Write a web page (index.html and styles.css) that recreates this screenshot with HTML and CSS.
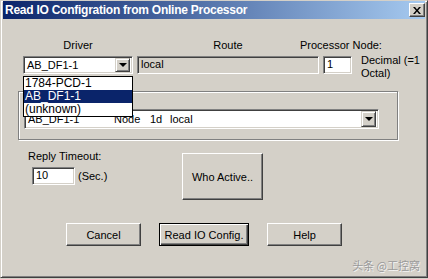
FILE: index.html
```html
<!DOCTYPE html>
<html lang="en">
<head>
    <meta charset="UTF-8">
    <meta name="viewport" content="width=device-width, initial-scale=1.0">
    <title>Read IO Configration</title>
    <link rel="stylesheet" href="styles.css">
</head>
<body>
<div class="window">
    <!-- Title bar ------------------------------------------------>
    <div class="titlebar">
        <span class="title">Read IO Configration from Online Processor</span>
        <button class="btn-close">
            <svg width="8" height="7" viewBox="0 0 8 7"><path d="M0 0h2l2 2.5L6 0h2L5 3.5 8 7H6L4 4.5 2 7H0l3-3.5z" fill="#000"/></svg>
        </button>
    </div>

    <div class="content">
        <!-- Driver / route / node ---------------------------------->
        <div class="top-grid">
            <div class="lbl lbl-driver">Driver</div>
            <div class="lbl lbl-route">Route</div>
            <div class="lbl lbl-node">Processor Node:</div>

            <div class="combo driver-combo">
                <span class="combo-text">AB_DF1-1</span>
                <span class="combo-arrow"><i class="tri"></i></span>
                <ul class="drop-list">
                    <li>1784-PCD-1</li>
                    <li class="selected">AB_DF1-1</li>
                    <li>(unknown)</li>
                </ul>
            </div>
            <div class="field disabled">local</div>
            <div class="field">1</div>
            <div class="note">Decimal (=1<br>Octal)</div>
        </div>

        <!-- Path group ---------------------------------------------->
        <div class="group">
            <div class="combo path-combo">
                <span class="combo-text">
                    <span class="col-drv">AB_DF1-1</span><span class="col-node">Node</span><span class="col-num">1d</span>local
                </span>
                <span class="combo-arrow"><i class="tri"></i></span>
            </div>
        </div>

        <!-- Timeout ------------------------------------------------->
        <div class="timeout-row">
            <div class="timeout">
                <div class="lbl">Reply Timeout:</div>
                <div class="timeout-input">
                    <div class="field small">10</div>
                    <span class="unit">(Sec.)</span>
                </div>
            </div>
            <button class="btn btn-who">Who Active..</button>
        </div>

        <!-- Dialog buttons ------------------------------------------>
        <div class="actions">
            <button class="btn">Cancel</button>
            <button class="btn btn-default">Read IO Config.</button>
            <button class="btn">Help</button>
        </div>

        <div class="watermark">头条 @工控窝</div>
    </div>
</div>
</body>
</html>
```

FILE: styles.css
```css
body {
  margin: 0;
  background-color: #d4d0c8;
  font-family: "Liberation Sans", Arial, sans-serif;
  font-size: 11px;
  color: #000;
}
.window {
  width: 428px;
  height: 278px;
  box-sizing: border-box;
  border: 1px solid;
  border-color: #d4d0c8 #404040 #404040 #d4d0c8;
  box-shadow: inset 1px 1px #fff, inset -1px -1px #808080;
  padding: 0 2px 2px 2px;
  background-color: #d4d0c8;
}
.titlebar {
  height: 18px;
  display: flex;
  align-items: center;
  justify-content: space-between;
  padding: 0 0 0 2px;
  background: linear-gradient(to right, #0a246a, #a6caf0);
  color: #fff;
}
.title {
  font-weight: bold;
  font-size: 12px;
  letter-spacing: -0.25px;
}
.btn-close {
  width: 16px;
  height: 14px;
  padding: 0;
  display: flex;
  align-items: center;
  justify-content: center;
  background-color: #d4d0c8;
  border: 1px solid;
  border-color: #fff #404040 #404040 #fff;
  box-shadow: inset -1px -1px #808080;
}
.content {
  position: relative;
  height: 257px;
}
.top-grid {
  display: grid;
  grid-template-columns: 110px 182px 29px auto;
  grid-template-rows: 13px 18px;
  column-gap: 4px;
  row-gap: 4px;
  padding: 20px 0 0 20px;
}
.top-grid .note {
  margin-left: 5px;
}
.lbl {
  line-height: 13px;
  white-space: nowrap;
}
.lbl-driver, .lbl-route {
  text-align: center;
}
.lbl-node {
  grid-column: 3 / span 2;
  margin-left: -23px;
}
.field {
  box-sizing: border-box;
  height: 18px;
  line-height: 14px;
  padding-left: 3px;
  background-color: #fff;
  border: 1px solid;
  border-color: #808080 #fff #fff #808080;
  box-shadow: inset 1px 1px #404040, inset -1px -1px #d4d0c8;
}
.field.disabled {
  background-color: #d4d0c8;
}
.note {
  line-height: 13px;
  margin-top: -2px;
}
.combo {
  position: relative;
  box-sizing: border-box;
  display: flex;
  align-items: center;
  justify-content: space-between;
  background-color: #fff;
  border: 1px solid;
  border-color: #808080 #fff #fff #808080;
  box-shadow: inset 1px 1px #404040, inset -1px -1px #d4d0c8;
  padding: 1px 2px 1px 3px;
}
.driver-combo {
  height: 18px;
}
.combo-arrow {
  box-sizing: border-box;
  width: 15px;
  height: 100%;
  display: flex;
  align-items: center;
  justify-content: center;
  background-color: #d4d0c8;
  border: 1px solid;
  border-color: #d4d0c8 #404040 #404040 #d4d0c8;
  box-shadow: inset 1px 1px #fff, inset -1px -1px #808080;
}
.tri {
  width: 0;
  height: 0;
  border-left: 4px solid transparent;
  border-right: 4px solid transparent;
  border-top: 4px solid #000;
}
.drop-list {
  position: absolute;
  left: -1px;
  top: 19px;
  width: 110px;
  box-sizing: border-box;
  margin: 0;
  padding: 0;
  list-style: none;
  background-color: #fff;
  border: 1px solid #000;
  z-index: 2;
}
.drop-list li {
  height: 13px;
  line-height: 13px;
  padding-left: 1px;
  font-size: 12px;
}
.drop-list li.selected {
  background-color: #0a246a;
  color: #fff;
}
.group {
  box-sizing: border-box;
  width: 380px;
  height: 49px;
  margin: 17px 0 0 15px;
  padding: 17px 0 0 5px;
  border: 1px solid #808080;
  box-shadow: inset 1px 1px #fff, 1px 1px #fff;
}
.path-combo {
  width: 355px;
  height: 20px;
}
.col-drv {
  display: inline-block;
  width: 86px;
}
.col-node {
  display: inline-block;
  width: 36px;
}
.col-num {
  display: inline-block;
  width: 20px;
}
.timeout-row {
  display: flex;
  margin-top: 10px;
  padding-left: 25px;
}
.timeout {
  width: 154px;
}
.timeout-input {
  display: flex;
  align-items: center;
  margin-top: 4px;
  padding-left: 4px;
}
.field.small {
  width: 43px;
}
.unit {
  margin-left: 3px;
}
.btn {
  box-sizing: border-box;
  height: 23px;
  width: 75px;
  padding: 0;
  font-family: "Liberation Sans", Arial, sans-serif;
  font-size: 11px;
  color: #000;
  background-color: #d4d0c8;
  border: 1px solid;
  border-color: #fff #404040 #404040 #fff;
  box-shadow: inset -1px -1px #808080;
}
.btn-who {
  width: 81px;
  height: 47px;
  margin-top: 3px;
}
.btn-default {
  width: 90px;
  border: 1px solid #000;
  box-shadow: inset 1px 1px #fff, inset -1px -1px #404040, inset -2px -2px #808080;
}
.actions {
  display: flex;
  gap: 18px;
  margin-top: 23px;
  padding-left: 63px;
}
.watermark {
  position: absolute;
  right: 5px;
  bottom: 3px;
  font-family: "Noto Sans CJK SC", sans-serif;
  font-size: 11px;
  color: #9a9a9a;
  text-shadow: 1px 1px #f4f4f4;
}
```
